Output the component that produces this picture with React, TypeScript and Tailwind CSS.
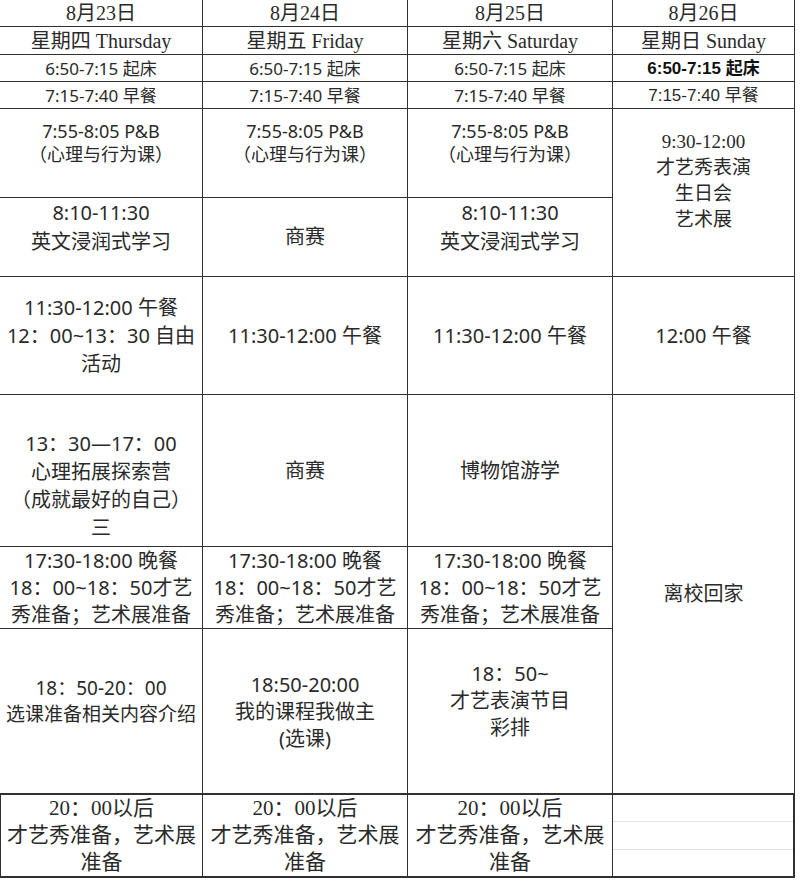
import React from "react";

const SANS = "font-['Noto_Sans','Noto_Sans_CJK_SC',sans-serif]";
const SERIF = "font-['Liberation_Serif','Noto_Sans_CJK_SC',serif]";

function Cell({
  className = "",
  lines,
  font = SANS,
}: {
  className?: string;
  lines: string[];
  font?: string;
}) {
  return (
    <div
      className={`flex flex-col items-center border-[#303030] text-center whitespace-nowrap text-[#2a2a2a] ${font} ${className}`}
    >
      {lines.map((l, i) => (
        <div key={i}>{l}</div>
      ))}
    </div>
  );
}

export default function App() {
  const base = "border-r border-b";
  const hdr = `${base} justify-center text-[20px] leading-none`;
  const small = `${base} justify-center text-[17px] leading-none`;
  return (
    <div className="w-[800px] h-[882px] bg-white overflow-hidden">
      <div className="grid grid-cols-[203px_205px_205px_182px] grid-rows-[27px_28px_27px_27px_89px_79px_118px_152px_82px_166px_83px]">
        {/* Row 1 */}
        <Cell className={`${hdr} col-start-1 row-start-1`} font={SERIF} lines={["8月23日"]} />
        <Cell className={`${hdr} col-start-2 row-start-1`} font={SERIF} lines={["8月24日"]} />
        <Cell className={`${hdr} col-start-3 row-start-1`} font={SERIF} lines={["8月25日"]} />
        <Cell className={`${hdr} col-start-4 row-start-1`} font={SERIF} lines={["8月26日"]} />
        {/* Row 2 */}
        <Cell className={`${hdr} col-start-1 row-start-2`} font={SERIF} lines={["星期四 Thursday"]} />
        <Cell className={`${hdr} col-start-2 row-start-2`} font={SERIF} lines={["星期五 Friday"]} />
        <Cell className={`${hdr} col-start-3 row-start-2`} font={SERIF} lines={["星期六 Saturday"]} />
        <Cell className={`${hdr} col-start-4 row-start-2`} font={SERIF} lines={["星期日 Sunday"]} />
        {/* Row 3 */}
        <Cell className={`${small} col-start-1 row-start-3`} lines={["6:50-7:15 起床"]} />
        <Cell className={`${small} col-start-2 row-start-3`} lines={["6:50-7:15 起床"]} />
        <Cell className={`${small} col-start-3 row-start-3`} lines={["6:50-7:15 起床"]} />
        <Cell
          className={`${small} col-start-4 row-start-3 font-semibold text-[#111]`}
          font="font-['Liberation_Sans','Noto_Sans_CJK_SC',sans-serif]"
          lines={["6:50-7:15 起床"]}
        />
        {/* Row 4 */}
        <Cell className={`${small} col-start-1 row-start-4`} lines={["7:15-7:40 早餐"]} />
        <Cell className={`${small} col-start-2 row-start-4`} lines={["7:15-7:40 早餐"]} />
        <Cell className={`${small} col-start-3 row-start-4`} lines={["7:15-7:40 早餐"]} />
        <Cell
          className={`${small} col-start-4 row-start-4 text-[16px]`}
          font="font-['Liberation_Sans','Noto_Sans_CJK_SC',sans-serif]"
          lines={["7:15-7:40 早餐"]}
        />
        {/* Row 5 */}
        {[1, 2, 3].map((c) => (
          <Cell
            key={c}
            className={`${base} justify-start pt-[11px] text-[18px] leading-[23px] ${
              c === 1 ? "col-start-1" : c === 2 ? "col-start-2" : "col-start-3"
            } row-start-5`}
            lines={["7:55-8:05 P&B", "（心理与行为课）"]}
          />
        ))}
        <Cell
          className={`${base} justify-start pt-[20px] text-[19px] leading-[26px] col-start-4 row-start-5 row-span-2`}
          font={SERIF}
          lines={["9:30-12:00", "才艺秀表演", "生日会", "艺术展"]}
        />
        {/* Row 6 */}
        <Cell
          className={`${base} justify-start pt-0 text-[20px] leading-[29px] col-start-1 row-start-6`}
          lines={["8:10-11:30", "英文浸润式学习"]}
        />
        <Cell className={`${base} justify-center text-[20px] leading-[28px] col-start-2 row-start-6`} lines={["商赛"]} />
        <Cell
          className={`${base} justify-start pt-0 text-[20px] leading-[29px] col-start-3 row-start-6`}
          lines={["8:10-11:30", "英文浸润式学习"]}
        />
        {/* Row 7 */}
        <Cell
          className={`${base} justify-center text-[20px] leading-[28px] col-start-1 row-start-7`}
          lines={["11:30-12:00 午餐", "12：00~13：30 自由", "活动"]}
        />
        <Cell
          className={`${base} justify-center text-[20px] leading-[28px] col-start-2 row-start-7`}
          lines={["11:30-12:00 午餐"]}
        />
        <Cell
          className={`${base} justify-center text-[20px] leading-[28px] col-start-3 row-start-7`}
          lines={["11:30-12:00 午餐"]}
        />
        <Cell
          className={`${base} justify-center text-[20px] leading-[28px] col-start-4 row-start-7`}
          lines={["12:00 午餐"]}
        />
        {/* Row 8 */}
        <Cell
          className={`${base} justify-center pt-[30px] text-[20px] leading-[28px] col-start-1 row-start-8`}
          lines={["13：30—17：00", "心理拓展探索营", "（成就最好的自己）", "三"]}
        />
        <Cell
          className={`${base} justify-center text-[20px] leading-[28px] col-start-2 row-start-8`}
          lines={["商赛"]}
        />
        <Cell
          className={`${base} justify-center text-[20px] leading-[28px] col-start-3 row-start-8`}
          lines={["博物馆游学"]}
        />
        <div className="col-start-4 row-start-8 row-span-3 border-r border-b-2 border-[#303030] flex items-center justify-center text-[20px] text-[#2a2a2a] font-['Noto_Sans','Noto_Sans_CJK_SC',sans-serif]">
          离校回家
        </div>
        {/* Row 9 */}
        {[1, 2, 3].map((c) => (
          <Cell
            key={c}
            className={`${base} justify-center text-[20px] leading-[27px] ${
              c === 1 ? "col-start-1" : c === 2 ? "col-start-2" : "col-start-3"
            } row-start-9`}
            lines={["17:30-18:00 晚餐", "18：00~18：50才艺", "秀准备；艺术展准备"]}
          />
        ))}
        {/* Row 10 */}
        <Cell
          className={`border-r border-b-2 justify-center pb-[20px] text-[19px] leading-[26px] col-start-1 row-start-10`}
          lines={["18：50-20：00", "选课准备相关内容介绍"]}
        />
        <Cell
          className={`border-r border-b-2 justify-center text-[20px] leading-[27px] col-start-2 row-start-10`}
          lines={["18:50-20:00", "我的课程我做主", "(选课)"]}
        />
        <Cell
          className={`border-r border-b-2 justify-center pb-[22px] text-[20px] leading-[27px] col-start-3 row-start-10`}
          lines={["18：50~", "才艺表演节目", "彩排"]}
        />
        {/* Row 11 */}
        {[1, 2, 3].map((c) => (
          <Cell
            key={c}
            className={`border-r border-b-2 justify-center text-[21px] leading-[27px] ${
              c === 1 ? "col-start-1 border-l" : c === 2 ? "col-start-2" : "col-start-3"
            } row-start-11`}
            font={SERIF}
            lines={["20：00以后", "才艺秀准备，艺术展", "准备"]}
          />
        ))}
        <div className="col-start-4 row-start-11 border-r-2 border-b-2 border-[#303030] flex flex-col">
          <div className="h-[27px] border-b border-[#e2e2e2]" />
          <div className="h-[28px] border-b border-[#e2e2e2]" />
          <div className="flex-1" />
        </div>
      </div>
    </div>
  );
}
